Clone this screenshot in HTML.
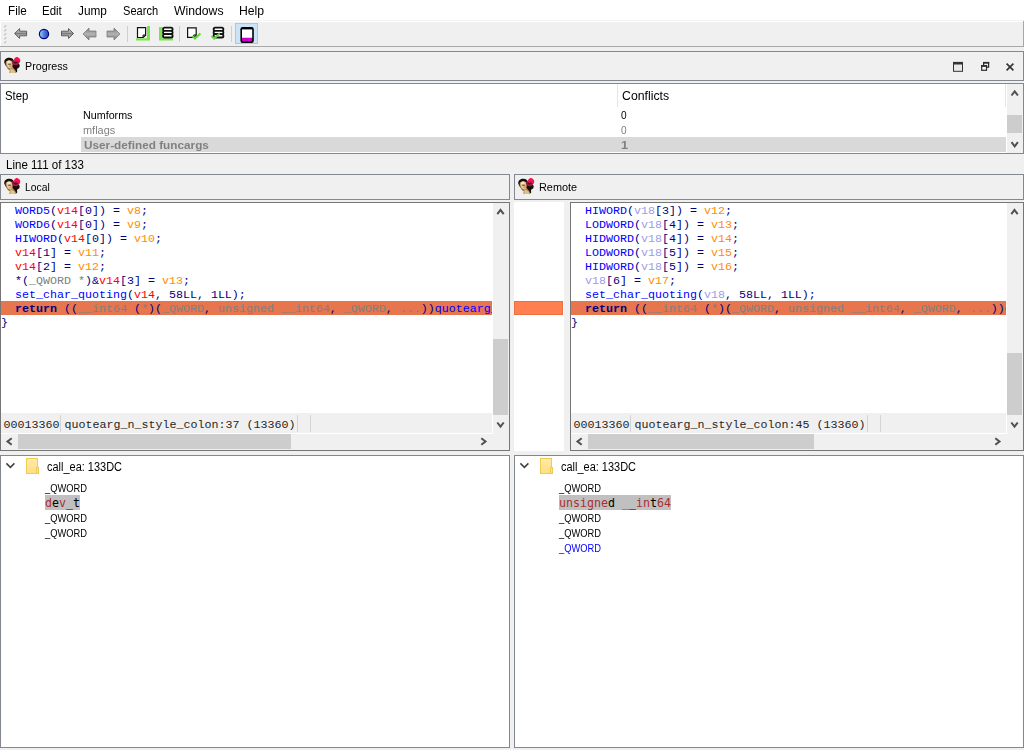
<!DOCTYPE html>
<html lang="en"><head><meta charset="utf-8"><title>IDA merge</title>
<style>
html,body{margin:0;padding:0}
body{width:1024px;height:750px;background:#f0f0f0;position:relative;overflow:hidden;font-family:"Liberation Sans",sans-serif;font-size:12px;color:#000}
div,span,svg{position:absolute;box-sizing:border-box}
span.i{position:static}
.box{border:1px solid #828790}
.t{white-space:pre;line-height:14px;height:14px}
.m{font-family:"Liberation Mono",monospace;font-size:11.6648px;white-space:pre;line-height:14px;height:14px;color:#000080}
.m2{font-family:"DejaVu Sans Mono","Liberation Mono",monospace;font-size:11.63px;white-space:pre;line-height:15px;height:15px;color:#000}
.b{color:#0000ff}.r{color:#ff0000}.o{color:#ff8c00}.g{color:#808080}.l{color:#9c9ce8}.n{color:#000080}
.dr{color:#b22222}
.sb{background:#f0f0f0}
.th{background:#cdcdcd}
</style></head>
<body>
<svg width="0" height="0" style="left:0;top:0"><defs><filter id="lb" x="-10%" y="-10%" width="120%" height="120%"><feGaussianBlur stdDeviation="0.35"/></filter><linearGradient id="fg" x1="0" y1="0" x2="0" y2="1"><stop offset="0" stop-color="#ffebaa"/><stop offset="1" stop-color="#ffdf80"/></linearGradient></defs></svg>
<div style="left:0px;top:0px;width:1024px;height:22px;background:#ffffff;"></div>
<div style="left:0px;top:20px;width:1024px;height:1px;background:#f3f3f3;"></div>
<div class="t" style="left:7.53px;top:4px;font-size:12px;transform:scaleX(0.9722);transform-origin:0 0">File</div>
<div class="t" style="left:42.34px;top:4px;font-size:12px;transform:scaleX(0.9550);transform-origin:0 0">Edit</div>
<div class="t" style="left:77.90px;top:4px;font-size:12px;transform:scaleX(0.9828);transform-origin:0 0">Jump</div>
<div class="t" style="left:123.08px;top:4px;font-size:12px;transform:scaleX(0.9222);transform-origin:0 0">Search</div>
<div class="t" style="left:174.20px;top:4px;font-size:12px;transform:scaleX(1.0167);transform-origin:0 0">Windows</div>
<div class="t" style="left:239.28px;top:4px;font-size:12px;transform:scaleX(1.0174);transform-origin:0 0">Help</div>
<div style="left:0px;top:46px;width:1024px;height:1px;background:#a8a8a8;"></div>
<div style="left:1023px;top:21px;width:1px;height:26px;background:#a8a8a8;"></div>
<div style="left:0px;top:21px;width:1px;height:25px;background:#ffffff;"></div>
<svg style="left:4px;top:25px" width="3" height="3" viewBox="0 0 3 3"><path d="M0.3 2.2 L1.5 2.2 L1.5 1 L2.4 1 L2.4 0.2 L1.5 0.6 L0.3 1.6 Z" fill="#a4a4a4"/></svg>
<svg style="left:4px;top:29px" width="3" height="3" viewBox="0 0 3 3"><path d="M0.3 2.2 L1.5 2.2 L1.5 1 L2.4 1 L2.4 0.2 L1.5 0.6 L0.3 1.6 Z" fill="#a4a4a4"/></svg>
<svg style="left:4px;top:33px" width="3" height="3" viewBox="0 0 3 3"><path d="M0.3 2.2 L1.5 2.2 L1.5 1 L2.4 1 L2.4 0.2 L1.5 0.6 L0.3 1.6 Z" fill="#a4a4a4"/></svg>
<svg style="left:4px;top:37px" width="3" height="3" viewBox="0 0 3 3"><path d="M0.3 2.2 L1.5 2.2 L1.5 1 L2.4 1 L2.4 0.2 L1.5 0.6 L0.3 1.6 Z" fill="#a4a4a4"/></svg>
<svg style="left:4px;top:41px" width="3" height="3" viewBox="0 0 3 3"><path d="M0.3 2.2 L1.5 2.2 L1.5 1 L2.4 1 L2.4 0.2 L1.5 0.6 L0.3 1.6 Z" fill="#a4a4a4"/></svg>
<div style="left:127px;top:26px;width:1px;height:16px;background:#cfcfcf;"></div>
<div style="left:179px;top:26px;width:1px;height:16px;background:#cfcfcf;"></div>
<div style="left:231px;top:26px;width:1px;height:16px;background:#cfcfcf;"></div>
<svg style="left:0px;top:22px" width="270" height="24" viewBox="0 22 270 24">
<defs>
<linearGradient id="ga" x1="0" y1="0" x2="0" y2="1"><stop offset="0" stop-color="#dedede"/><stop offset="0.4" stop-color="#a0a0a0"/><stop offset="0.5" stop-color="#7c7c7c"/><stop offset="0.6" stop-color="#9c9c9c"/><stop offset="1" stop-color="#cccccc"/></linearGradient>
<linearGradient id="gb" x1="0" y1="0" x2="0" y2="1"><stop offset="0" stop-color="#7c7c7c"/><stop offset="0.5" stop-color="#b4b4b4"/><stop offset="1" stop-color="#7c7c7c"/></linearGradient>
<linearGradient id="gc" x1="0" y1="0" x2="1" y2="0"><stop offset="0" stop-color="#98dcf6"/><stop offset="0.5" stop-color="#4f7fdc"/><stop offset="1" stop-color="#3040b8"/></linearGradient>
</defs>
<path d="M14.6 33.5 L19.6 28.6 V31.2 H26.6 V35.8 H19.6 V38.4 Z" fill="url(#ga)" stroke="#5c5c5c" stroke-width="1" stroke-linejoin="miter"/>
<circle cx="44" cy="34" r="4.6" fill="url(#gc)" stroke="#00008a" stroke-width="1.2"/>
<path d="M73.5 33.5 L68.5 28.6 V31.2 H61.5 V35.8 H68.5 V38.4 Z" fill="url(#ga)" stroke="#5c5c5c" stroke-width="1" stroke-linejoin="miter"/>
<path d="M83 34 L89 28 V31 H96 V37 H89 V40 Z" fill="url(#gb)" stroke="#7c7c7c" stroke-width="0.8"/>
<path d="M120 34 L114 28 V31 H107 V37 H114 V40 Z" fill="url(#gb)" stroke="#7c7c7c" stroke-width="0.8"/>
<!-- page + green corner -->
<path d="M136 38.3 H147 V26 H150 V40.6 H136 Z" fill="#78e64a"/>
<path d="M137.5 27.6 H145.6 V35.2 L143.2 37.5 H137.5 Z" fill="#ffffff" stroke="#111" stroke-width="1.2" stroke-linejoin="miter"/>
<path d="M145.6 35 H143 V37.5" fill="none" stroke="#111" stroke-width="1"/>
<!-- db + green corner -->
<path d="M159 27 H162 V38.3 H173 V40.6 H159 Z" fill="#78e64a"/>
<rect x="163" y="27.6" width="9.6" height="3.3" rx="1.6" fill="#fff" stroke="#111" stroke-width="1.8"/>
<rect x="163" y="30.9" width="9.6" height="3.3" rx="1.6" fill="#fff" stroke="#111" stroke-width="1.8"/>
<rect x="163" y="34.2" width="9.6" height="3.3" rx="1.6" fill="#fff" stroke="#111" stroke-width="1.8"/>
<!-- page + check -->
<path d="M187.6 27.8 H196.2 V35.2 L193.8 37.4 H187.6 Z" fill="#ffffff" stroke="#111" stroke-width="1.2" stroke-linejoin="miter"/>
<path d="M196.2 35 H193.6 V37.4" fill="none" stroke="#111" stroke-width="1"/>
<path d="M192.4 36 L195 38.6 L200.4 33.6" fill="none" stroke="#62d63c" stroke-width="2"/>
<!-- db + check -->
<rect x="213.6" y="27.6" width="9.8" height="3.3" rx="1.6" fill="#fff" stroke="#111" stroke-width="1.8"/>
<rect x="213.6" y="30.9" width="9.8" height="3.3" rx="1.6" fill="#fff" stroke="#111" stroke-width="1.8"/>
<rect x="213.6" y="34.2" width="9.8" height="3.3" rx="1.6" fill="#fff" stroke="#111" stroke-width="1.8"/>
<path d="M211.4 36 L214.2 38.6 L219.6 33.6" fill="none" stroke="#62d63c" stroke-width="2"/>
<!-- active button -->
<rect x="235.5" y="23.5" width="22" height="20" fill="#cce4f7" stroke="#9accf5" stroke-width="1"/>
<rect x="240.4" y="27" width="13.4" height="16" rx="2.2" fill="#000"/>
<rect x="242" y="29.4" width="10.2" height="8.6" fill="#fff"/>
<path d="M242 37.8 H252.2 V40 Q252.2 41.5 250.7 41.5 H243.5 Q242 41.5 242 40 Z" fill="#cc00cc"/>
</svg>

<div class="box" style="left:0px;top:51px;width:1024px;height:30px;background:#f0f0f0"></div>
<svg style="left:3px;top:56px" width="18" height="18" viewBox="-1 -1 18 18">
<g filter="url(#lb)">
<path d="M0.3 5.8 C-0.2 2.6 2.6 0.7 5.4 0.8 C7.8 0.8 9.2 2 9.8 3.6 L13 6 C15.6 6.2 16.4 8.8 15.2 10.2 C14.6 11 13.4 11.2 13 11.8 L13.2 14.4 L12.2 15.6 L9 15.6 L8.4 10 L2.2 9.6 Z" fill="#120d0c"/>
<path d="M1.8 4.8 C2.8 3.2 6 2.8 7.6 3.8 C8.8 5 9 7.4 8.6 9.4 C8.8 10.4 9.4 11.2 10.2 11.8 L11.8 14 L11.6 16 L5.2 16 L5.8 13.2 C4.4 12.8 3.2 11.8 2.8 10.2 C2.2 8.4 1.2 6.6 1.8 4.8 Z" fill="#b48c58"/>
<path d="M2.6 4.8 C3.6 3.4 6 3.2 7.2 4.2 C8.2 5.6 8.4 8 7.8 10 C7 11.8 4.8 12 3.8 10.6 C3 8.8 2.2 6.4 2.6 4.8 Z" fill="#e6cc9a"/>
<path d="M3.4 4.4 C4.4 3.6 6 3.6 6.6 4.6 C6.8 5.8 5.8 6.4 4.6 6.2 C3.6 6 3 5.2 3.4 4.4 Z" fill="#f8e8bc"/>
<ellipse cx="5.6" cy="7.3" rx="1.9" ry="0.7" fill="#5e4632" opacity="0.8"/>
<ellipse cx="6.6" cy="9.3" rx="1.5" ry="1" fill="#d88a68" opacity="0.85"/>
<path d="M3 9.6 C3.4 11 4.4 12.2 5.8 12.8 L6.4 11.8 C5 11.4 3.8 10.6 3 9.6 Z" fill="#8a5a34" opacity="0.8"/>
<path d="M6.6 11.8 C8.2 11.8 9.8 12.8 11.2 14.4 L11.4 16 L6.2 16 Z" fill="#dcc28e"/>
<path d="M9.8 2.8 C10.2 1.4 11.2 0.2 12.4 -0.1 C13.6 -0.2 14.4 0.6 15.2 1.2 C16.2 2 16.5 3.2 16.1 4.4 C15.9 5.6 15.2 6.2 14.4 6 L13.8 4.4 L10.4 3.8 Z" fill="#ff1052"/>
<path d="M8 4.2 C8.6 3.2 9.8 3 10.6 3.6 C11.8 4 13 3.8 14 4.2 C14.8 4.8 15 6 14.6 7 C13.8 8.2 12.2 8.6 10.8 8.2 C9 7.8 7.6 6 8 4.2 Z" fill="#a01a42"/>
<path d="M9.2 4.6 C10.2 5.6 12.6 5.6 13.8 5 C13.6 6.8 10 7.2 9.2 4.6 Z" fill="#30091a"/>
</g>
</svg>
<div class="t" style="left:24.73px;top:59px;font-size:11px;transform:scaleX(0.9744);transform-origin:0 0">Progress</div>
<svg style="left:948px;top:58px" width="72" height="18" viewBox="948 58 72 18">
<rect x="953.5" y="63" width="9" height="8.3" fill="#e9e9e9" stroke="#333" stroke-width="1"/>
<rect x="953" y="61.9" width="10" height="2.6" fill="#333"/>
<rect x="983.6" y="62.6" width="5" height="4.6" fill="none" stroke="#2c2c2c" stroke-width="1.2"/>
<rect x="983" y="61.9" width="6.2" height="1.7" fill="#2c2c2c"/>
<rect x="981.7" y="65.8" width="4.8" height="4.5" fill="#f6f6f6" stroke="#2c2c2c" stroke-width="1.2"/>
<rect x="981.1" y="65" width="6" height="1.8" fill="#2c2c2c"/>
<path d="M1006.6 63.6 L1013.4 70.4 M1013.4 63.6 L1006.6 70.4" stroke="#333" stroke-width="1.6" fill="none"/>
</svg>

<div class="box" style="left:0px;top:83px;width:1024px;height:71px;background:#ffffff"></div>
<div class="t" style="left:5.05px;top:89px;font-size:12px;transform:scaleX(0.9478);transform-origin:0 0">Step</div>
<div class="t" style="left:622.38px;top:89px;font-size:12px;transform:scaleX(1.0244);transform-origin:0 0">Conflicts</div>
<div style="left:617px;top:84px;width:1px;height:23px;background:#e5e5e5;"></div>
<div style="left:1005px;top:84px;width:1px;height:23px;background:#e5e5e5;"></div>
<div class="t" style="left:82.62px;top:108px;font-size:11px;transform:scaleX(0.9755);transform-origin:0 0">Numforms</div>
<div class="t" style="left:82.61px;top:123px;font-size:11px;color:#808080;transform:scaleX(0.9935);transform-origin:0 0">mflags</div>
<div style="left:81px;top:137px;width:925px;height:15px;background:#d9d9d9;"></div>
<div class="t" style="left:84.23px;top:138px;font-size:11px;color:#808080;font-weight:bold;transform:scaleX(1.0698);transform-origin:0 0">User-defined funcargs</div>
<div class="t" style="left:620.80px;top:108px;font-size:11px;transform:scaleX(0.9167);transform-origin:0 0">0</div>
<div class="t" style="left:620.80px;top:123px;font-size:11px;color:#808080;transform:scaleX(0.9167);transform-origin:0 0">0</div>
<div class="t" style="left:620.54px;top:138px;font-size:11px;color:#808080;font-weight:bold;transform:scaleX(1.1600);transform-origin:0 0">1</div>
<div style="left:1007px;top:84px;width:16px;height:69px;background:#f0f0f0;"></div>
<div style="left:1007px;top:115px;width:15px;height:18px;background:#cdcdcd;"></div>
<svg style="left:1006px;top:85px" width="16" height="16" viewBox="-8.70 -8.00 16 16"><polyline points="-3.2,2.5 0,-1.7 3.2,2.5" fill="none" stroke="#505050" stroke-width="2.0"/></svg>
<svg style="left:1006px;top:136px" width="16" height="16" viewBox="-8.70 -8.70 16 16"><polyline points="-3.2,-2.5 0,1.7 3.2,-2.5" fill="none" stroke="#505050" stroke-width="2.0"/></svg>
<div class="t" style="left:5.64px;top:158px;font-size:12px;transform:scaleX(0.9613);transform-origin:0 0">Line 111 of 133</div>
<div class="box" style="left:0px;top:174px;width:510px;height:26px;background:#f0f0f0"></div>
<svg style="left:3px;top:177px" width="18" height="18" viewBox="-1 -1 18 18">
<g filter="url(#lb)">
<path d="M0.3 5.8 C-0.2 2.6 2.6 0.7 5.4 0.8 C7.8 0.8 9.2 2 9.8 3.6 L13 6 C15.6 6.2 16.4 8.8 15.2 10.2 C14.6 11 13.4 11.2 13 11.8 L13.2 14.4 L12.2 15.6 L9 15.6 L8.4 10 L2.2 9.6 Z" fill="#120d0c"/>
<path d="M1.8 4.8 C2.8 3.2 6 2.8 7.6 3.8 C8.8 5 9 7.4 8.6 9.4 C8.8 10.4 9.4 11.2 10.2 11.8 L11.8 14 L11.6 16 L5.2 16 L5.8 13.2 C4.4 12.8 3.2 11.8 2.8 10.2 C2.2 8.4 1.2 6.6 1.8 4.8 Z" fill="#b48c58"/>
<path d="M2.6 4.8 C3.6 3.4 6 3.2 7.2 4.2 C8.2 5.6 8.4 8 7.8 10 C7 11.8 4.8 12 3.8 10.6 C3 8.8 2.2 6.4 2.6 4.8 Z" fill="#e6cc9a"/>
<path d="M3.4 4.4 C4.4 3.6 6 3.6 6.6 4.6 C6.8 5.8 5.8 6.4 4.6 6.2 C3.6 6 3 5.2 3.4 4.4 Z" fill="#f8e8bc"/>
<ellipse cx="5.6" cy="7.3" rx="1.9" ry="0.7" fill="#5e4632" opacity="0.8"/>
<ellipse cx="6.6" cy="9.3" rx="1.5" ry="1" fill="#d88a68" opacity="0.85"/>
<path d="M3 9.6 C3.4 11 4.4 12.2 5.8 12.8 L6.4 11.8 C5 11.4 3.8 10.6 3 9.6 Z" fill="#8a5a34" opacity="0.8"/>
<path d="M6.6 11.8 C8.2 11.8 9.8 12.8 11.2 14.4 L11.4 16 L6.2 16 Z" fill="#dcc28e"/>
<path d="M9.8 2.8 C10.2 1.4 11.2 0.2 12.4 -0.1 C13.6 -0.2 14.4 0.6 15.2 1.2 C16.2 2 16.5 3.2 16.1 4.4 C15.9 5.6 15.2 6.2 14.4 6 L13.8 4.4 L10.4 3.8 Z" fill="#ff1052"/>
<path d="M8 4.2 C8.6 3.2 9.8 3 10.6 3.6 C11.8 4 13 3.8 14 4.2 C14.8 4.8 15 6 14.6 7 C13.8 8.2 12.2 8.6 10.8 8.2 C9 7.8 7.6 6 8 4.2 Z" fill="#a01a42"/>
<path d="M9.2 4.6 C10.2 5.6 12.6 5.6 13.8 5 C13.6 6.8 10 7.2 9.2 4.6 Z" fill="#30091a"/>
</g>
</svg>
<div class="t" style="left:24.76px;top:180px;font-size:11px;transform:scaleX(0.9400);transform-origin:0 0">Local</div>
<div class="box" style="left:514px;top:174px;width:510px;height:26px;background:#f0f0f0"></div>
<svg style="left:517px;top:177px" width="18" height="18" viewBox="-1 -1 18 18">
<g filter="url(#lb)">
<path d="M0.3 5.8 C-0.2 2.6 2.6 0.7 5.4 0.8 C7.8 0.8 9.2 2 9.8 3.6 L13 6 C15.6 6.2 16.4 8.8 15.2 10.2 C14.6 11 13.4 11.2 13 11.8 L13.2 14.4 L12.2 15.6 L9 15.6 L8.4 10 L2.2 9.6 Z" fill="#120d0c"/>
<path d="M1.8 4.8 C2.8 3.2 6 2.8 7.6 3.8 C8.8 5 9 7.4 8.6 9.4 C8.8 10.4 9.4 11.2 10.2 11.8 L11.8 14 L11.6 16 L5.2 16 L5.8 13.2 C4.4 12.8 3.2 11.8 2.8 10.2 C2.2 8.4 1.2 6.6 1.8 4.8 Z" fill="#b48c58"/>
<path d="M2.6 4.8 C3.6 3.4 6 3.2 7.2 4.2 C8.2 5.6 8.4 8 7.8 10 C7 11.8 4.8 12 3.8 10.6 C3 8.8 2.2 6.4 2.6 4.8 Z" fill="#e6cc9a"/>
<path d="M3.4 4.4 C4.4 3.6 6 3.6 6.6 4.6 C6.8 5.8 5.8 6.4 4.6 6.2 C3.6 6 3 5.2 3.4 4.4 Z" fill="#f8e8bc"/>
<ellipse cx="5.6" cy="7.3" rx="1.9" ry="0.7" fill="#5e4632" opacity="0.8"/>
<ellipse cx="6.6" cy="9.3" rx="1.5" ry="1" fill="#d88a68" opacity="0.85"/>
<path d="M3 9.6 C3.4 11 4.4 12.2 5.8 12.8 L6.4 11.8 C5 11.4 3.8 10.6 3 9.6 Z" fill="#8a5a34" opacity="0.8"/>
<path d="M6.6 11.8 C8.2 11.8 9.8 12.8 11.2 14.4 L11.4 16 L6.2 16 Z" fill="#dcc28e"/>
<path d="M9.8 2.8 C10.2 1.4 11.2 0.2 12.4 -0.1 C13.6 -0.2 14.4 0.6 15.2 1.2 C16.2 2 16.5 3.2 16.1 4.4 C15.9 5.6 15.2 6.2 14.4 6 L13.8 4.4 L10.4 3.8 Z" fill="#ff1052"/>
<path d="M8 4.2 C8.6 3.2 9.8 3 10.6 3.6 C11.8 4 13 3.8 14 4.2 C14.8 4.8 15 6 14.6 7 C13.8 8.2 12.2 8.6 10.8 8.2 C9 7.8 7.6 6 8 4.2 Z" fill="#a01a42"/>
<path d="M9.2 4.6 C10.2 5.6 12.6 5.6 13.8 5 C13.6 6.8 10 7.2 9.2 4.6 Z" fill="#30091a"/>
</g>
</svg>
<div class="t" style="left:538.71px;top:180px;font-size:11px;transform:scaleX(0.9892);transform-origin:0 0">Remote</div>
<div class="box" style="left:0px;top:202px;width:510px;height:249px;background:#fff;border-color:#767676"></div>
<div style="left:1px;top:203px;width:491px;height:210px;overflow:hidden">
<div style="left:0;top:98px;width:100%;height:14px;background:#e7764f"></div>
<div class="m" style="left:0px;top:1px">  <span class="i b">WORD5</span>(<span class="i r">v14</span>[0]) = <span class="i o">v8</span>;</div>
<div class="m" style="left:0px;top:15px">  <span class="i b">WORD6</span>(<span class="i r">v14</span>[0]) = <span class="i o">v9</span>;</div>
<div class="m" style="left:0px;top:29px">  <span class="i b">HIWORD</span>(<span class="i r">v14</span>[0]) = <span class="i o">v10</span>;</div>
<div class="m" style="left:0px;top:43px">  <span class="i r">v14</span>[1] = <span class="i o">v11</span>;</div>
<div class="m" style="left:0px;top:57px">  <span class="i r">v14</span>[2] = <span class="i o">v12</span>;</div>
<div class="m" style="left:0px;top:71px">  *(<span class="i g">_QWORD *</span>)&amp;<span class="i r">v14</span>[3] = <span class="i o">v13</span>;</div>
<div class="m" style="left:0px;top:85px">  <span class="i b">set_char_quoting</span>(<span class="i r">v14</span>, 58LL, 1LL);</div>
<div class="m" style="left:0px;top:99px">  <span class="i" style="font-weight:bold">return</span> ((<span class="i g">__int64</span> (<span class="i g">*</span>)(<span class="i g">_QWORD</span>, <span class="i g">unsigned __int64</span>, <span class="i g">_QWORD</span>, <span class="i g">...</span>))<span class="i b">quotearg_n_style_colon</span></div>
<div class="m" style="left:0px;top:113px">}</div>
</div>
<div style="left:1px;top:413px;width:491px;height:20px;background:#f0f0f0;"></div>
<div class="m" style="left:3.5px;top:418px;color:#262626;">00013360</div>
<div class="m" style="left:64.6px;top:418px;color:#262626;">quotearg_n_style_colon:37 (13360)</div>
<div style="left:60px;top:415px;width:1px;height:17px;background:#d4d4d4;"></div>
<div style="left:297px;top:415px;width:1px;height:17px;background:#d4d4d4;"></div>
<div style="left:310px;top:415px;width:1px;height:17px;background:#d4d4d4;"></div>
<div style="left:493px;top:203px;width:16px;height:247px;background:#f0f0f0;"></div>
<div style="left:493px;top:339px;width:15px;height:76px;background:#cdcdcd;"></div>
<svg style="left:492px;top:203px" width="16" height="16" viewBox="-8.50 -8.70 16 16"><polyline points="-3.2,2.5 0,-1.7 3.2,2.5" fill="none" stroke="#505050" stroke-width="2.0"/></svg>
<svg style="left:492px;top:417px" width="16" height="16" viewBox="-8.50 -8.00 16 16"><polyline points="-3.2,-2.5 0,1.7 3.2,-2.5" fill="none" stroke="#505050" stroke-width="2.0"/></svg>
<div style="left:1px;top:434px;width:492px;height:16px;background:#f0f0f0;"></div>
<div style="left:18px;top:434px;width:273px;height:15px;background:#cdcdcd;"></div>
<svg style="left:1px;top:433px" width="16" height="16" viewBox="-8.20 -8.50 16 16"><polyline points="2.5,-3.2 -1.7,0 2.5,3.2" fill="none" stroke="#505050" stroke-width="2.0"/></svg>
<svg style="left:475px;top:433px" width="16" height="16" viewBox="-8.80 -8.50 16 16"><polyline points="-2.5,-3.2 1.7,0 -2.5,3.2" fill="none" stroke="#505050" stroke-width="2.0"/></svg>
<div style="left:514px;top:202px;width:50px;height:249px;background:#ffffff;"></div>
<div style="left:514px;top:301px;width:49px;height:14px;background:#ff7f50;border:1px solid #ee7040;"></div>
<div class="box" style="left:570px;top:202px;width:454px;height:249px;background:#fff;border-color:#767676"></div>
<div style="left:571px;top:203px;width:435px;height:210px;overflow:hidden">
<div style="left:0;top:98px;width:100%;height:14px;background:#e7764f"></div>
<div class="m" style="left:0px;top:1px">  <span class="i b">HIWORD</span>(<span class="i l">v18</span>[3]) = <span class="i o">v12</span>;</div>
<div class="m" style="left:0px;top:15px">  <span class="i b">LODWORD</span>(<span class="i l">v18</span>[4]) = <span class="i o">v13</span>;</div>
<div class="m" style="left:0px;top:29px">  <span class="i b">HIDWORD</span>(<span class="i l">v18</span>[4]) = <span class="i o">v14</span>;</div>
<div class="m" style="left:0px;top:43px">  <span class="i b">LODWORD</span>(<span class="i l">v18</span>[5]) = <span class="i o">v15</span>;</div>
<div class="m" style="left:0px;top:57px">  <span class="i b">HIDWORD</span>(<span class="i l">v18</span>[5]) = <span class="i o">v16</span>;</div>
<div class="m" style="left:0px;top:71px">  <span class="i l">v18</span>[6] = <span class="i o">v17</span>;</div>
<div class="m" style="left:0px;top:85px">  <span class="i b">set_char_quoting</span>(<span class="i l">v18</span>, 58LL, 1LL);</div>
<div class="m" style="left:0px;top:99px">  <span class="i" style="font-weight:bold">return</span> ((<span class="i g">__int64</span> (<span class="i g">*</span>)(<span class="i g">_QWORD</span>, <span class="i g">unsigned __int64</span>, <span class="i g">_QWORD</span>, <span class="i g">...</span>))<span class="i b">quotearg_n_style_colon</span></div>
<div class="m" style="left:0px;top:113px">}</div>
</div>
<div style="left:571px;top:413px;width:435px;height:20px;background:#f0f0f0;"></div>
<div class="m" style="left:573.5px;top:418px;color:#262626;">00013360</div>
<div class="m" style="left:634.6px;top:418px;color:#262626;">quotearg_n_style_colon:45 (13360)</div>
<div style="left:630px;top:415px;width:1px;height:17px;background:#d4d4d4;"></div>
<div style="left:867px;top:415px;width:1px;height:17px;background:#d4d4d4;"></div>
<div style="left:880px;top:415px;width:1px;height:17px;background:#d4d4d4;"></div>
<div style="left:1007px;top:203px;width:16px;height:247px;background:#f0f0f0;"></div>
<div style="left:1007px;top:353px;width:15px;height:62px;background:#cdcdcd;"></div>
<svg style="left:1006px;top:203px" width="16" height="16" viewBox="-8.50 -8.70 16 16"><polyline points="-3.2,2.5 0,-1.7 3.2,2.5" fill="none" stroke="#505050" stroke-width="2.0"/></svg>
<svg style="left:1006px;top:417px" width="16" height="16" viewBox="-8.50 -8.00 16 16"><polyline points="-3.2,-2.5 0,1.7 3.2,-2.5" fill="none" stroke="#505050" stroke-width="2.0"/></svg>
<div style="left:571px;top:434px;width:436px;height:16px;background:#f0f0f0;"></div>
<div style="left:588px;top:434px;width:226px;height:15px;background:#cdcdcd;"></div>
<svg style="left:571px;top:433px" width="16" height="16" viewBox="-8.20 -8.50 16 16"><polyline points="2.5,-3.2 -1.7,0 2.5,3.2" fill="none" stroke="#505050" stroke-width="2.0"/></svg>
<svg style="left:989px;top:433px" width="16" height="16" viewBox="-8.80 -8.50 16 16"><polyline points="-2.5,-3.2 1.7,0 -2.5,3.2" fill="none" stroke="#505050" stroke-width="2.0"/></svg>
<div class="box" style="left:0px;top:455px;width:510px;height:293px;background:#ffffff"></div>
<svg style="left:2px;top:457px" width="16" height="16" viewBox="-8.40 -8.40 16 16"><polyline points="-4,-2 0,2 4,-2" fill="none" stroke="#404040" stroke-width="1.5"/></svg>
<svg style="left:26px;top:458px" width="14" height="16" viewBox="0 0 14 16">
<rect x="0.5" y="0.5" width="11" height="15" fill="url(#fg)" stroke="#efca55" stroke-width="1"/>
<rect x="10.5" y="9.5" width="2" height="6" fill="#ffe28a" stroke="#efca55" stroke-width="1"/>
</svg>
<div class="t" style="left:46.60px;top:460px;font-size:12px;transform:scaleX(0.9136);transform-origin:0 0">call_ea: 133DC</div>
<div class="t" style="left:45.00px;top:481px;font-size:11px;transform:scaleX(0.8490);transform-origin:0 0">_QWORD</div>
<div class="m2" style="left:45px;top:495px;background:#c0c0c0"><span class="i" style="position:relative;top:1px"><span class="i" style="color:#a83030">d</span><span class="i" style="color:#000">e</span><span class="i" style="color:#a83030">v</span><span class="i" style="color:#000">_t</span></span></div>
<div class="t" style="left:45.00px;top:511px;font-size:11px;transform:scaleX(0.8490);transform-origin:0 0">_QWORD</div>
<div class="t" style="left:45.00px;top:526px;font-size:11px;transform:scaleX(0.8490);transform-origin:0 0">_QWORD</div>
<div class="box" style="left:514px;top:455px;width:510px;height:293px;background:#ffffff"></div>
<svg style="left:516px;top:457px" width="16" height="16" viewBox="-8.40 -8.40 16 16"><polyline points="-4,-2 0,2 4,-2" fill="none" stroke="#404040" stroke-width="1.5"/></svg>
<svg style="left:540px;top:458px" width="14" height="16" viewBox="0 0 14 16">
<rect x="0.5" y="0.5" width="11" height="15" fill="url(#fg)" stroke="#efca55" stroke-width="1"/>
<rect x="10.5" y="9.5" width="2" height="6" fill="#ffe28a" stroke="#efca55" stroke-width="1"/>
</svg>
<div class="t" style="left:560.60px;top:460px;font-size:12px;transform:scaleX(0.9136);transform-origin:0 0">call_ea: 133DC</div>
<div class="t" style="left:559.00px;top:481px;font-size:11px;transform:scaleX(0.8490);transform-origin:0 0">_QWORD</div>
<div class="m2" style="left:559px;top:495px;background:#c0c0c0"><span class="i" style="position:relative;top:1px"><span class="i" style="color:#a83030">unsigne</span><span class="i" style="color:#000">d </span><span class="i" style="color:#a83030">_</span><span class="i" style="color:#000">_</span><span class="i" style="color:#a83030">in</span><span class="i" style="color:#000">t</span><span class="i" style="color:#a83030">64</span></span></div>
<div class="t" style="left:559.00px;top:511px;font-size:11px;transform:scaleX(0.8490);transform-origin:0 0">_QWORD</div>
<div class="t" style="left:559.00px;top:526px;font-size:11px;transform:scaleX(0.8490);transform-origin:0 0">_QWORD</div>
<div class="t" style="left:559.00px;top:541px;font-size:11px;color:#0000ff;transform:scaleX(0.8490);transform-origin:0 0">_QWORD</div>
</body></html>
